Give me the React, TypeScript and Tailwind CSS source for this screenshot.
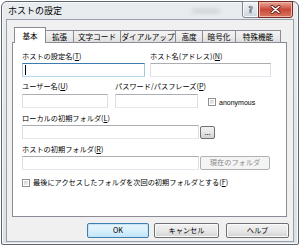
import React from 'react';

const font = { fontFamily: '"Noto Sans CJK JP", "Liberation Sans", sans-serif' };

const tabs = [
  { label: '基本', w: 'w-[32px]' },
  { label: '拡張', w: 'w-[29px]' },
  { label: '文字コード', w: 'w-[48px]' },
  { label: 'ダイアルアップ', w: 'w-[56px]' },
  { label: '高度', w: 'w-[28px]' },
  { label: '暗号化', w: 'w-[34px]' },
  { label: '特殊機能', w: 'w-[46px]' },
];

const Label = ({ text, k, className = '' }: { text: string; k: string; className?: string }) => (
  <div className={`h-[9px] text-[7.2px] leading-[9px] text-black whitespace-nowrap ${className}`}>
    {text}(<span className="underline">{k}</span>)
  </div>
);

const Input = ({ className = '', focused = false }: { className?: string; focused?: boolean }) => (
  <div
    className={`relative h-[14px] bg-white border ${
      focused
        ? 'border-t-[#3d7bad] border-x-[#a4c9e3] border-b-[#b7d9ed]'
        : 'border-t-[#abadb3] border-x-[#dbdfe6] border-b-[#e3e9ef]'
    } ${className}`}
  >
    {focused && <div className="absolute left-[2px] top-[1px] w-px h-[10px] bg-black" />}
  </div>
);

const CheckBox = () => (
  <div className="w-[8px] h-[8px] border border-[#8f8f8f] bg-white p-px">
    <div className="w-full h-full bg-gradient-to-br from-[#cbcfd5] to-[#f4f4f4]" />
  </div>
);

const SmallButton = ({ children, className = '', disabled = false }: { children: React.ReactNode; className?: string; disabled?: boolean }) => (
  <div
    className={`flex items-center justify-center rounded-[2px] border text-[7.2px] leading-none ${
      disabled
        ? 'border-[#adb2b5] bg-[#f4f4f4] text-[#8a8a8a]'
        : 'border-[#707070] bg-gradient-to-b from-[#f2f2f2] via-[#e6e6e6] to-[#d2d2d2] text-black'
    } ${className}`}
  >
    {children}
  </div>
);

const DialogButton = ({ children, className = '', def = false }: { children: React.ReactNode; className?: string; def?: boolean }) => (
  <div
    className={`h-[15px] flex items-center justify-center rounded-[2px] border text-[7.2px] leading-none text-black ${
      def
        ? 'border-[#3c7fb1] bg-gradient-to-b from-[#eaf6fd] via-[#d9f0fc] to-[#bee6fd] shadow-[inset_0_0_0_1px_#c7e3f4]'
        : 'border-[#707070] bg-gradient-to-b from-[#f2f2f2] via-[#e8e8e8] to-[#d3d3d3] shadow-[inset_0_0_0_1px_#fbfbfb]'
    } ${className}`}
  >
    {children}
  </div>
);

export default function App() {
  return (
    <div className="w-[300px] h-[247px] bg-white overflow-hidden" style={font}>
      <div className="ml-[1px] mt-[1px] w-[298px] h-[244px] rounded-t-[6px] rounded-b-[2px] border border-[#5f656c] bg-gradient-to-b from-[#e9ecef] via-[#e2e6ea] to-[#dde1e5] shadow-[inset_0_0_0_1px_#f6f8fa]">
        {/* Title bar */}
        <div className="relative h-[17px]">
          <div className="pl-[6px] pt-[3px] text-[9px] leading-[11px] text-black">ホストの設定</div>
          <div className="absolute left-[190px] top-[7px] w-[28px] h-[4px] rounded-full bg-[#c9ced3] blur-[2px]" />
          <div className="absolute right-[5px] top-[-1px] flex">
            <div className="w-[17px] h-[17px] rounded-bl-[3px] border border-[#7c8590] bg-gradient-to-b from-[#f1f4f7] via-[#dfe5ea] to-[#cdd5dd] flex items-center justify-center shadow-[inset_0_0_0_1px_#f8fafb]">
              <span className="text-[9px] leading-none font-bold text-white" style={{ WebkitTextStroke: '0.6px #4d5560' }}>?</span>
            </div>
            <div className="-ml-px w-[35px] h-[17px] rounded-br-[3px] border border-[#7a2a22] bg-gradient-to-b from-[#e9a99b] via-[#c9473a] to-[#d8775f] flex items-center justify-center shadow-[inset_0_0_0_1px_#eeb8ad]">
              <svg width="11" height="9" viewBox="0 0 11 9">
                <path d="M2 1.5 L9 7.5 M9 1.5 L2 7.5" stroke="#5a1a14" strokeWidth="3" strokeLinecap="round" />
                <path d="M2 1.5 L9 7.5 M9 1.5 L2 7.5" stroke="#ffffff" strokeWidth="1.6" strokeLinecap="round" />
              </svg>
            </div>
          </div>
        </div>

        {/* Client area */}
        <div className="ml-[4px] w-[288px] h-[223px] border border-[#98a1ab] bg-[#f0f0f0] pt-[7px] pl-[5px]">
          {/* Tabs */}
          <div className="flex items-end h-[15px] pl-[2px]">
            {tabs.map((t, i) =>
              i === 0 ? (
                <div
                  key={t.label}
                  className={`relative z-10 -mb-px h-[16px] ${t.w} border border-b-0 border-[#898c95] bg-white flex items-center justify-center text-[7.6px] leading-none text-black whitespace-nowrap`}
                >
                  {t.label}
                </div>
              ) : (
                <div
                  key={t.label}
                  className={`-ml-px h-[12px] ${t.w} border border-b-0 border-[#898c95] bg-gradient-to-b from-[#f3f3f3] via-[#ebebeb] to-[#dedede] flex items-center justify-center text-[7.6px] leading-none text-black whitespace-nowrap`}
                >
                  {t.label}
                </div>
              )
            )}
          </div>

          {/* Tab panel */}
          <div className="w-[275px] h-[175px] border border-[#898c95] bg-white pl-[9px] pt-[9px]">
            <div className="flex">
              <Label text="ホストの設定名" k="T" className="w-[128px]" />
              <Label text="ホスト名(アドレス)" k="N" />
            </div>
            <div className="flex gap-[5px] mt-[2px]">
              <Input focused className="w-[123px]" />
              <Input className="w-[121px]" />
            </div>

            <div className="flex mt-[5px]">
              <Label text="ユーザー名" k="U" className="w-[93px]" />
              <Label text="パスワード/パスフレーズ" k="P" />
            </div>
            <div className="flex items-center mt-[3px]">
              <Input className="w-[86px]" />
              <Input className="w-[83px] ml-[7px]" />
              <div className="flex items-center ml-[10px] mt-[2px]">
                <CheckBox />
                <span className="ml-[3px] text-[7px] leading-none text-black" style={{ fontFamily: '"Liberation Sans", sans-serif' }}>anonymous</span>
              </div>
            </div>

            <Label text="ローカルの初期フォルダ" k="L" className="mt-[6px]" />
            <div className="flex items-start mt-[2px]">
              <Input className="w-[177px]" />
              <SmallButton className="ml-[1px] mt-px w-[15px] h-[13px]">...</SmallButton>
            </div>

            <Label text="ホストの初期フォルダ" k="R" className="mt-[6px]" />
            <div className="flex mt-[2px]">
              <Input className="w-[177px]" />
              <SmallButton disabled className="ml-[1px] w-[70px] h-[14px]">現在のフォルダ</SmallButton>
            </div>

            <div className="flex items-center mt-[8px]">
              <CheckBox />
              <span className="ml-[3px] text-[7.2px] leading-[9px] text-black whitespace-nowrap">
                最後にアクセスしたフォルダを次回の初期フォルダとする(<span className="underline">F</span>)
              </span>
            </div>
          </div>

          {/* Dialog buttons */}
          <div className="flex mt-[6px] pl-[75px]">
            <DialogButton def className="w-[62px]">OK</DialogButton>
            <DialogButton className="w-[65px] ml-[5px]">キャンセル</DialogButton>
            <DialogButton className="w-[63px] ml-[7px]">ヘルプ</DialogButton>
          </div>
        </div>
      </div>
    </div>
  );
}
